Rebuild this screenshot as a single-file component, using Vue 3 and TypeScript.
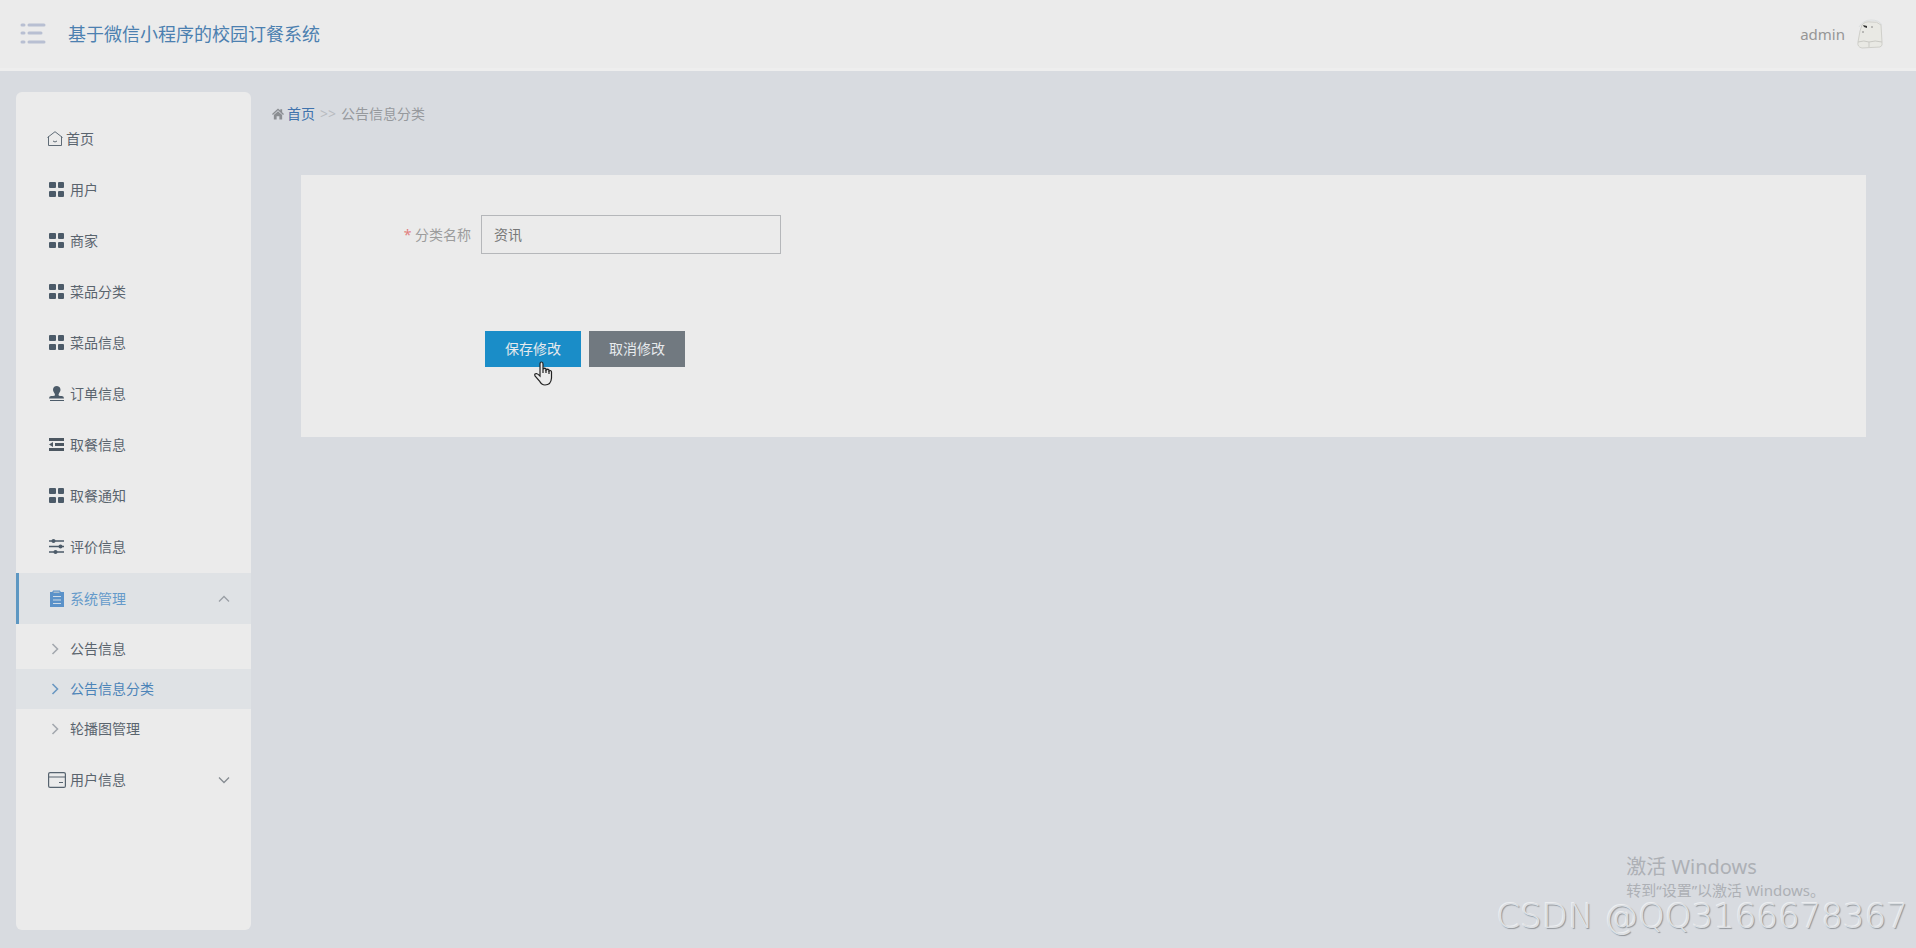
<script setup lang="ts">
import { ref } from 'vue'

type IconName = 'grid' | 'stamp' | 'indent' | 'sliders'

interface MenuItem {
  label: string
  icon: IconName
}

const menu: MenuItem[] = [
  { label: '用户', icon: 'grid' },
  { label: '商家', icon: 'grid' },
  { label: '菜品分类', icon: 'grid' },
  { label: '菜品信息', icon: 'grid' },
  { label: '订单信息', icon: 'stamp' },
  { label: '取餐信息', icon: 'indent' },
  { label: '取餐通知', icon: 'grid' },
  { label: '评价信息', icon: 'sliders' },
]

const subMenu: string[] = ['公告信息', '公告信息分类', '轮播图管理']
const activeSub = ref('公告信息分类')
const systemOpen = ref(true)
const categoryName = ref('资讯')
</script>

<template>
  <div class="page">
    <header class="topbar">
      <button class="toggle" type="button" aria-label="菜单">
        <svg width="30" height="22" viewBox="0 0 30 22" fill="none" stroke="#b8bfd2" stroke-width="3" stroke-linecap="round">
          <path d="M4 2h2M11 2h15M4 10h2M11 10h12M4 19h2M11 19h15" />
        </svg>
      </button>
      <h1 class="title">基于微信小程序的校园订餐系统</h1>
      <div class="account">
        <span>admin</span>
        <svg width="30" height="32" viewBox="0 0 30 32">
          <path d="M4 9Q8 2 16 2Q24 2 27 7" fill="none" stroke="#dcdfe0" stroke-width="1" />
          <path d="M3 24L5 13L7 7Q10 3 16 4Q22 3 26 7L27 24Q28 28 25 29L7 30Q2 29 3 24Z" fill="#e9e9e4" stroke="#cfcfca" />
          <path d="M3 24Q9 22 14 24Q20 22 27 24M14 24V29" fill="none" stroke="#c9c9c4" />
          <path d="M8 7l4 1v2l-3-1z" fill="#333" />
          <path d="M16 9h2M7 14h2" stroke="#888" />
        </svg>
      </div>
    </header>

    <div class="body">
      <nav class="sidebar">
        <a class="item home" href="#">
          <svg width="16" height="16" viewBox="0 0 16 16" fill="none" stroke="#5f6b76" stroke-width="1">
            <path d="M1.500 5.500V14.500H14.500V5.500M0.500 6.500L8 0.700L15.500 6.500M6 10Q8 12 10 10" />
          </svg>
          <span>首页</span>
        </a>
        <a v-for="item in menu" :key="item.label" class="item" href="#">
          <svg class="icon" width="16" height="16" viewBox="0 0 16 16">
            <g v-if="item.icon === 'grid'" fill="#4c5b69">
              <rect x="0" y="0" width="7" height="6" rx="1" />
              <rect x="9" y="0" width="6" height="6" rx="1" />
              <rect x="0" y="9" width="7" height="6" rx="1" />
              <rect x="9" y="9" width="6" height="6" rx="1" />
            </g>
            <g v-else-if="item.icon === 'stamp'" fill="#4c5b69">
              <path d="M8 0A4 4 0 0 0 4 4C4 6 6 7 6 9Q6 10 4 10H2Q0 10 0 12.500H15Q15 10 13 10H11.500Q9.500 10 9.500 9C9.500 7 11.500 6 11.500 4A4 4 0 0 0 8 0Z" />
              <rect x="1" y="14" width="14" height="1" />
            </g>
            <g v-else-if="item.icon === 'indent'" fill="#4c5761">
              <rect x="0" y="1" width="15" height="3" />
              <rect x="6" y="6" width="9" height="3" />
              <rect x="0" y="11" width="15" height="3" />
              <path d="M0 7.500L4 5V10Z" />
            </g>
            <g v-else fill="#4c5b69">
              <path d="M0 2H15M0 7.500H15M0 13H15" stroke="#4c5b69" stroke-width="1.400" />
              <circle cx="4.500" cy="2" r="2" />
              <circle cx="11.500" cy="7.500" r="2" />
              <circle cx="6.500" cy="13" r="2" />
            </g>
          </svg>
          <span>{{ item.label }}</span>
        </a>

        <div class="group">
          <button class="item active" type="button" :aria-expanded="systemOpen" @click="systemOpen = !systemOpen">
            <svg class="icon" width="16" height="18" viewBox="0 0 16 18">
              <rect x="1" y="2" width="14" height="15" fill="#5b92c9" />
              <path d="M4 3V1H11V3" fill="#a9bdcf" stroke="#5b92c9" />
              <path d="M4 6.500H12M4 10H12M4 13.500H12" stroke="#cfdbe6" stroke-width="1.200" />
            </svg>
            <span>系统管理</span>
            <svg class="arrow" width="12" height="8" viewBox="0 0 12 8" fill="none" stroke="#9a9fa5" stroke-width="1.300">
              <path d="M1 6.500L6 1.500L11 6.500" />
            </svg>
          </button>
          <div v-if="systemOpen" class="sub">
            <a
              v-for="name in subMenu"
              :key="name"
              href="#"
              class="sub-item"
              :class="{ current: name === activeSub }"
              @click.prevent="activeSub = name"
            >
              <svg width="8" height="12" viewBox="0 0 8 12" fill="none" stroke="currentColor" stroke-width="1.600">
                <path d="M1.500 1L6.500 6L1.500 11" />
              </svg>
              <span>{{ name }}</span>
            </a>
          </div>
          <button class="item user-info" type="button">
            <svg width="18" height="16" viewBox="0 0 18 16" fill="none" stroke="#56636f" stroke-width="1.200">
              <rect x="0.600" y="0.600" width="16.800" height="14.800" rx="1.500" />
              <path d="M1 5H17M11 10.500H15" />
            </svg>
            <span>用户信息</span>
            <svg class="arrow" width="12" height="8" viewBox="0 0 12 8" fill="none" stroke="#868c92" stroke-width="1.300">
              <path d="M1 1.500L6 6.500L11 1.500" />
            </svg>
          </button>
        </div>
      </nav>

      <main class="content">
        <nav class="crumbs">
          <svg width="12" height="12" viewBox="0 0 13 12" fill="#8b8e92">
            <path d="M6.500 0L9 2.200V0.800H11V4L13 6L12 7L6.500 2L1 7L0 6Z" />
            <path d="M6.500 3L11 7V12H8V8.500H5V12H2V7Z" />
          </svg>
          <a href="#">首页</a>
          <span class="sep">&gt;&gt;</span>
          <span>公告信息分类</span>
        </nav>

        <form class="card" @submit.prevent>
          <div class="field">
            <label for="category"><span class="star">*</span> 分类名称</label>
            <input id="category" v-model="categoryName" type="text" />
          </div>
          <div class="actions">
            <button class="btn save" type="submit">
              保存修改
              <svg class="pointer" width="20" height="26" viewBox="0 0 20 26">
                <path
                  d="M7 14V3Q7 1 8.500 1T10 3V9V8Q11.500 6.500 13 8V9Q14.500 7.500 16 9V10Q18.500 9 18.500 11V17Q18 24 12 24Q8.500 24 6.500 20L2 15Q1 12.500 3.500 12.500Q5 13 7 15Z"
                  fill="#ebebeb"
                  stroke="#222"
                  stroke-width="1.200"
                />
                <path d="M10 9V12M13 9V12M16 10V13" stroke="#222" stroke-width="1.200" />
              </svg>
            </button>
            <button class="btn cancel" type="button">取消修改</button>
          </div>
        </form>
      </main>
    </div>

    <div class="activate">
      <p class="activate-title">激活 Windows</p>
      <p class="activate-text">转到“设置”以激活 Windows。</p>
    </div>
    <div class="mark">CSDN @QQ3166678367</div>
  </div>
</template>

<style>
body {
  margin: 0;
}
</style>

<style scoped>
.page {
  position: relative;
  display: flex;
  flex-direction: column;
  min-height: 100vh;
  overflow: hidden;
  box-sizing: border-box;
  background: #d8dbe0;
  color: #5a646e;
  font-family: "Noto Sans", "Noto Sans CJK SC", sans-serif;
  font-size: 14px;
  line-height: 20px;
}

button,
input {
  font: inherit;
  color: inherit;
}

a {
  color: inherit;
  text-decoration: none;
}

.topbar {
  display: flex;
  align-items: center;
  height: 68px;
  padding: 0 31px 0 18px;
  border-bottom: 3px solid #eeeeee;
  background: #ebebeb;
}

.toggle {
  display: flex;
  padding: 0;
  border: 0;
  background: none;
}

.title {
  margin: 0 0 0 20px;
  color: #4c80b0;
  font-size: 18px;
  font-weight: 400;
  line-height: 24px;
}

.account {
  display: flex;
  align-items: center;
  gap: 10px;
  margin-left: auto;
  color: #969696;
  font-size: 15px;
}

.body {
  display: flex;
  flex: 1;
  padding: 21px 0 18px 16px;
}

.sidebar {
  box-sizing: border-box;
  flex: none;
  width: 235px;
  padding-top: 21px;
  border-radius: 6px;
  background: #ebebeb;
}

.item {
  display: flex;
  align-items: center;
  gap: 5px;
  box-sizing: border-box;
  width: 100%;
  height: 51px;
  padding: 0 21px 0 33px;
  border: 0;
  background: none;
  text-align: left;
}

.item.home {
  gap: 3px;
  padding-left: 31px;
}

.group {
  padding-top: 1px;
}

.item.active {
  padding-left: 30px;
  border-left: 3px solid #5d97c2;
  background: #dfe2e5;
  color: #659aca;
}

.item.user-info {
  gap: 4px;
  padding-left: 32px;
}

.arrow {
  margin-left: auto;
}

.sub {
  padding: 5px 0;
}

.sub-item {
  display: flex;
  align-items: center;
  gap: 11px;
  height: 40px;
  padding-left: 35px;
}

.sub-item svg {
  color: #a3a8ae;
}

.sub-item.current {
  background: #dfe2e5;
  color: #4c84b8;
}

.sub-item.current svg {
  color: #6a98c2;
}

.content {
  flex: 1;
  padding: 12px 50px 0 21px;
}

.crumbs {
  display: flex;
  align-items: center;
  gap: 3px;
  color: #96999d;
}

.crumbs a {
  color: #4073ad;
}

.sep {
  margin: 0 2px;
  color: #b8bbc0;
}

.card {
  margin: 51px 0 0 29px;
  padding: 40px 100px 70px;
  background: #ebebeb;
}

.field {
  display: flex;
  align-items: center;
  gap: 10px;
  color: #9c9c9c;
}

.field label {
  width: 70px;
  text-align: right;
  white-space: nowrap;
}

.star {
  color: #e28080;
}

.field input {
  box-sizing: border-box;
  width: 300px;
  height: 39px;
  padding: 0 12px 2px;
  border: 1px solid #b5b7ba;
  border-radius: 0;
  outline: 0;
  background: #ebebeb;
  color: #777777;
}

.actions {
  display: flex;
  gap: 8px;
  margin: 77px 0 0 84px;
}

.btn {
  position: relative;
  width: 96px;
  height: 36px;
  padding: 0;
  border: 0;
  color: #e6eaed;
}

.save {
  background: #1a8dc8;
}

.cancel {
  background: #717980;
}

.pointer {
  position: absolute;
  top: 30px;
  left: 48px;
}

.activate {
  position: absolute;
  right: 91px;
  bottom: 48px;
  color: #adb0b5;
}

.activate p {
  margin: 0;
}

.activate-title {
  font-size: 20px;
  line-height: 26px;
}

.activate-text {
  font-size: 15px;
  line-height: 20px;
}

.mark {
  position: absolute;
  right: 8px;
  bottom: 14px;
  color: #dde0e4;
  font-family: "DejaVu Sans", sans-serif;
  font-size: 34px;
  font-weight: 200;
  line-height: 36px;
  text-shadow: 1px 1px 1px #8f9398, -1px -1px 0 #eceef0;
}
</style>
